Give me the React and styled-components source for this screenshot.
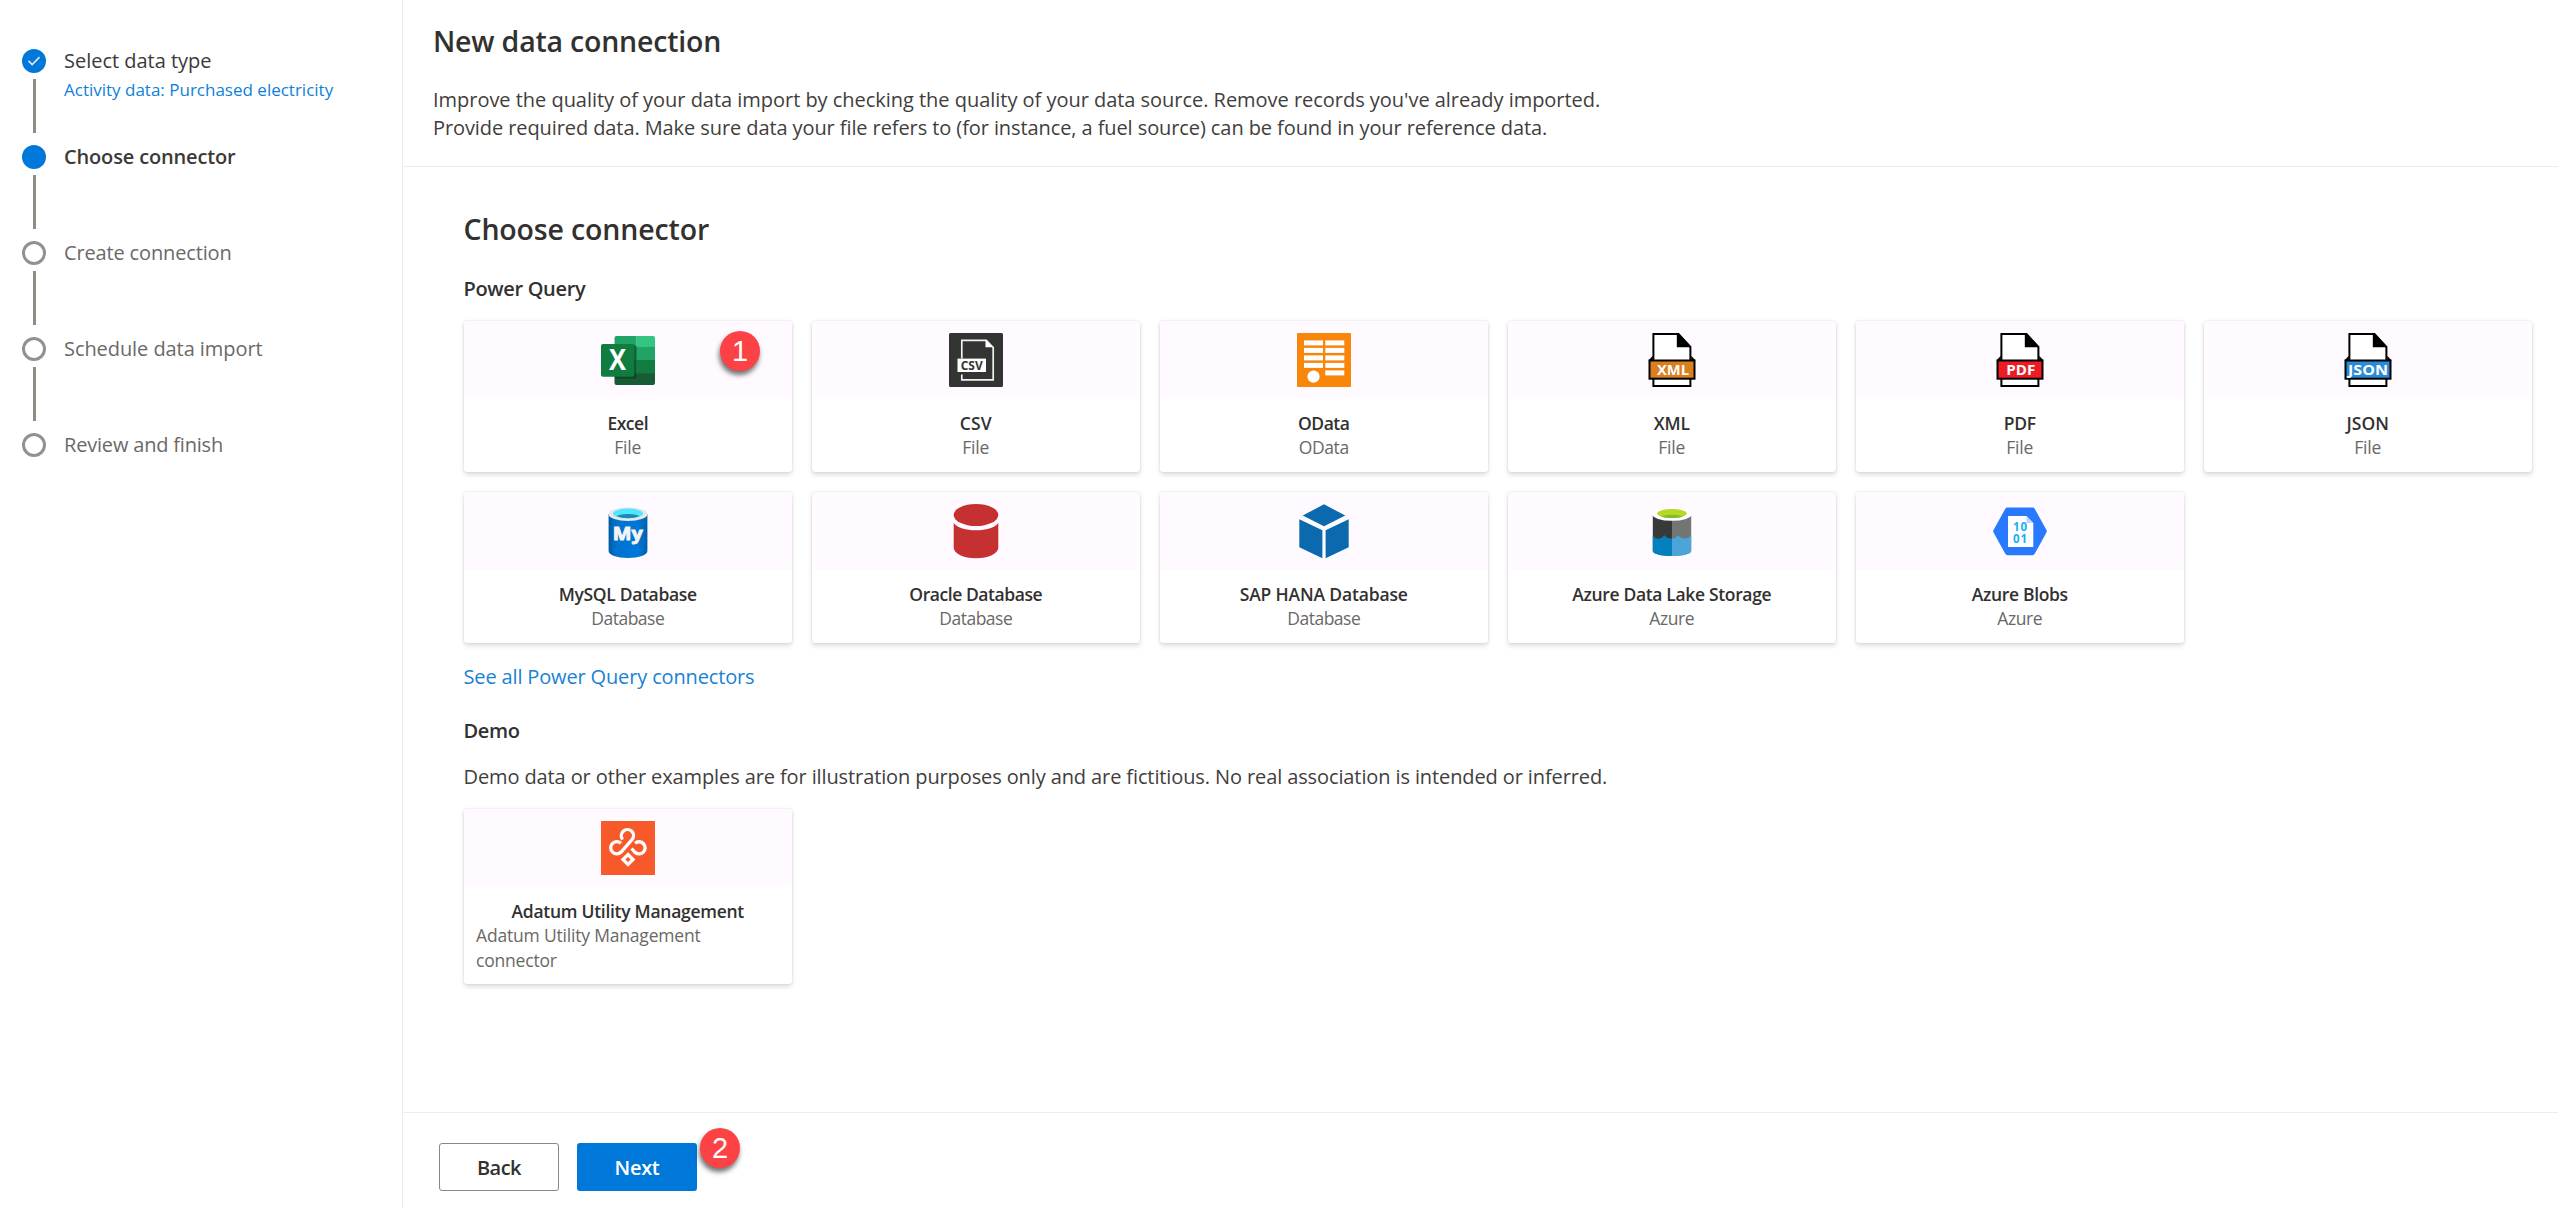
import React from "react";
import styled, { createGlobalStyle } from "styled-components";

const GlobalStyle = createGlobalStyle`
  *, *::before, *::after { box-sizing: border-box; }
  body {
    margin: 0;
    background: #fff;
    color: #323130;
    font-family: "Open Sans", "Noto Sans", sans-serif;
    overflow: hidden;
  }
`;

const Shell = styled.div`
  display: flex;
  height: 1208px;
  width: 100%;
`;

/* ---------- Stepper ---------- */

const Sidebar = styled.nav`
  flex: none;
  width: 403px;
  padding: 47px 0 0 22px;
  border-right: 1px solid #f0ebef;
`;

const Step = styled.div`
  display: flex;
  height: 96px;
`;

const Rail = styled.div`
  display: flex;
  flex-direction: column;
  align-items: center;
  width: 24px;
  padding-top: 1.5px;
`;

const Marker = styled.div`
  display: flex;
  align-items: center;
  justify-content: center;
  flex: none;
  width: 24px;
  height: 24px;
  border-radius: 50%;
  border: ${(p) => (p.$filled ? "0" : "3px solid #93918e")};
  background: ${(p) => (p.$filled ? "#0078d9" : "transparent")};
`;

const Connector = styled.div`
  width: 3px;
  height: 54px;
  margin-top: 6px;
  background: #8f8d86;
`;

const StepText = styled.div`
  display: flex;
  flex-direction: column;
  padding-left: 18px;
`;

const StepLabel = styled.span`
  font-size: 20px;
  line-height: 27px;
  white-space: nowrap;
  letter-spacing: ${(p) => p.$ls}px;
  font-weight: ${(p) => (p.$state === "current" ? 600 : 400)};
  color: ${(p) => (p.$state === "todo" ? "#6b6967" : "#3b3a39")};
`;

const StepDetail = styled.span`
  font-size: 17px;
  line-height: 32px;
  white-space: nowrap;
  color: #0f80da;
`;

/* ---------- Main column ---------- */

const Main = styled.main`
  display: flex;
  flex: 1;
  flex-direction: column;
  min-width: 0;
`;

const Header = styled.header`
  flex: none;
  height: 167px;
  padding: 21px 0 0 30px;
  border-bottom: 1px solid #f0ebef;
`;

const Heading = styled.h1`
  margin: 0;
  font-size: 28.5px;
  font-weight: 600;
  line-height: 40px;
  letter-spacing: ${(p) => p.$ls}px;
`;

const Intro = styled.div`
  margin-top: 25px;
`;

const Paragraph = styled.p`
  margin: 0;
  font-size: 20px;
  line-height: 28.3px;
  letter-spacing: ${(p) => p.$ls}px;
  color: #3f3e3d;
  white-space: nowrap;
`;

const Content = styled.section`
  flex: 1;
  padding: 42px 0 0 60.5px;
`;

const GroupTitle = styled.h2`
  margin: 26px 0 0;
  font-size: 20px;
  font-weight: 600;
  line-height: 28px;
  letter-spacing: -0.33px;
`;

const GroupNote = styled.div`
  margin-top: 18.5px;
`;

const CardGrid = styled.div`
  display: grid;
  grid-template-columns: repeat(6, 328.5px);
  grid-auto-rows: minmax(151px, auto);
  gap: 20px 19.5px;
  margin-top: 18px;
`;

const CardBox = styled.article`
  position: relative;
  display: flex;
  flex-direction: column;
  align-items: center;
  padding-bottom: 12.5px;
  border-radius: 3px;
  background: #fff;
  box-shadow: 0 2.4px 5.4px rgba(0, 0, 0, 0.13), 0 0 2px rgba(60, 0, 40, 0.14);
`;

const IconBand = styled.div`
  display: flex;
  align-items: center;
  justify-content: center;
  align-self: stretch;
  height: 78px;
  border-radius: 3px 3px 0 0;
  background: #fefaff;
`;

const CardText = styled.div`
  display: flex;
  flex-direction: column;
  align-items: center;
  padding: 12px 12.5px 0;
`;

const CardTitle = styled.span`
  font-size: 17.5px;
  font-weight: 600;
  line-height: 24px;
  letter-spacing: ${(p) => p.$ls}px;
`;

const CardKind = styled.span`
  font-size: 17.5px;
  line-height: 24.2px;
  letter-spacing: ${(p) => p.$ls}px;
  color: #6a6866;
`;

const Link = styled.a`
  display: block;
  margin-top: 19.5px;
  font-size: 20px;
  line-height: 28px;
  letter-spacing: -0.15px;
  color: #1a82d2;
`;

const Footer = styled.footer`
  display: flex;
  flex: none;
  gap: 18px;
  height: 96px;
  padding: 30px 0 0 36px;
  border-top: 1px solid #f0ebef;
`;

const ButtonSlot = styled.div`
  position: relative;
`;

const Button = styled.button`
  display: block;
  width: 120px;
  height: 48px;
  padding: 0;
  border: ${(p) => (p.$primary ? "0" : "1.5px solid #8a8886")};
  border-radius: 3px;
  background: ${(p) => (p.$primary ? "#0078d9" : "#fff")};
  color: ${(p) => (p.$primary ? "#fff" : "#323130")};
  font: 600 20px "Open Sans", "Noto Sans", sans-serif;
  letter-spacing: ${(p) => p.$ls}px;
`;

const Badge = styled.span`
  position: absolute;
  left: ${(p) => p.$left}px;
  top: ${(p) => p.$top}px;
  display: flex;
  align-items: center;
  justify-content: center;
  width: 40px;
  height: 40px;
  border-radius: 50%;
  background: #fd4245;
  color: #fff;
  font: 29px "Liberation Sans", Arial, sans-serif;
  box-shadow: -1px 4px 5px rgba(0, 0, 0, 0.55);
`;

/* ---------- Icons ---------- */

const Glyph = styled.svg`
  display: block;
  width: 54px;
  height: 54px;
  overflow: visible;
  font-family: "Open Sans", "Noto Sans", sans-serif;
  font-weight: 700;
`;

const Icon = ({ children }) => <Glyph viewBox="0 0 54 54">{children}</Glyph>;

const ExcelIcon = () => (
  <Icon>
    <defs>
      <clipPath id="xl-sheet"><rect x="13.5" y="3" width="40.5" height="49" rx="2" /></clipPath>
    </defs>
    <g clipPath="url(#xl-sheet)">
      <rect x="13" y="3" width="22.5" height="11" fill="#21a366" />
      <rect x="35.3" y="3" width="19" height="11" fill="#33c481" />
      <rect x="13" y="14" width="41" height="13.2" fill="#21a366" />
      <rect x="35.3" y="27" width="19" height="14" fill="#107c41" />
      <rect x="13" y="27" width="22.5" height="14" fill="#107c41" />
      <rect x="13" y="40.5" width="41" height="12" fill="#185c37" />
      <rect x="13" y="12" width="23" height="34" rx="2.5" fill="#06391d" opacity=".35" />
      <rect x="13" y="12" width="21.8" height="33" rx="2.5" fill="#06391d" opacity=".45" />
    </g>
    <rect x="0" y="11" width="33.3" height="32.7" rx="2" fill="#107c41" />
    <text x="16.5" y="37.3" fontSize="28" textAnchor="middle" fill="#fff" textLength="17" lengthAdjust="spacingAndGlyphs">X</text>
  </Icon>
);

const CsvIcon = () => (
  <Icon>
    <rect width="54" height="54" rx="1.5" fill="#323532" />
    <path d="M12.8 25.5V7.3H37.3L44.2 14.5V46.9H12.8V41.5" fill="none" stroke="#f4eff4" strokeWidth="1.7" />
    <path d="M36.5 6.8V14.3H44.5Z" fill="#fff" />
    <rect x="8.5" y="25.6" width="28.5" height="13.4" fill="#fff" />
    <text x="22.7" y="36.5" fontSize="11.8" textAnchor="middle" fill="#323532" textLength="22" lengthAdjust="spacingAndGlyphs">CSV</text>
  </Icon>
);

const ODataIcon = () => (
  <Icon>
    <rect width="54" height="54" rx="1" fill="#f8860b" />
    {[7.4, 14.9, 22.4, 29.9].map((y) => <rect key={y} x="7" y={y} width="19" height="5" fill="#fff" />)}
    {[7.4, 14.9, 22.4, 29.9, 37.4].map((y) => <rect key={y} x="28.3" y={y} width="19" height="5" fill="#fff" />)}
    <circle cx="16.5" cy="43.6" r="6.1" fill="#fff" />
  </Icon>
);

const FileIcon = ({ label, color, size, center = 27, width }) => (
  <Icon>
    <path d="M8.4 1H33.5L45.4 14V53H8.4Z" fill="#fff" stroke="#000" strokeWidth="2" />
    <path d="M31.8 1H34L46 14.2H31.8Z" fill="#000" />
    <path d="M3.4 27.5L7.8 22.8V27.5ZM50.6 27.5L46.2 22.8V27.5Z" fill="#000" />
    <rect x="4.5" y="27.5" width="45" height="18.2" fill={color} stroke="#000" strokeWidth="2" />
    <text x={center} y="42.2" fontSize={size} textAnchor="middle" fill="#fff" textLength={width} lengthAdjust="spacingAndGlyphs">{label}</text>
  </Icon>
);

const MySqlIcon = () => (
  <Icon>
    <defs>
      <linearGradient id="my-body">
        <stop offset="0" stopColor="#005ba1" />
        <stop offset=".2" stopColor="#0072cf" />
        <stop offset=".75" stopColor="#0078d9" />
        <stop offset="1" stopColor="#0060ab" />
      </linearGradient>
    </defs>
    <path d="M7.6 10V47C7.6 50.8 16 54 27 54S46.4 50.8 46.4 47V10Z" fill="url(#my-body)" />
    <ellipse cx="27" cy="10.2" rx="19.4" ry="6.9" fill="#e8e8e8" />
    <ellipse cx="27" cy="9.4" rx="15" ry="4.8" fill="#50e6ff" />
    <path d="M15.5 12.3C18 10.8 22 10 27 10S36 10.8 38.5 12.3C35.5 13.6 31.5 14.2 27 14.2S18.5 13.6 15.5 12.3Z" fill="#198ab3" />
    <text x="26.8" y="36.4" fontSize="17.5" textAnchor="middle" fill="#f4f4f4" stroke="#f4f4f4" strokeWidth=".9" textLength="30" lengthAdjust="spacingAndGlyphs">My</text>
  </Icon>
);

const OracleIcon = () => (
  <Icon>
    <ellipse cx="27" cy="11" rx="22.3" ry="11" fill="#c53030" />
    <path d="M4.7 19C8.5 24 17 26.3 27 26.3S45.5 24 49.3 19V43.5C49.3 49.5 39.5 54.3 27 54.3S4.7 49.5 4.7 43.5Z" fill="#c53030" />
  </Icon>
);

const SapIcon = () => (
  <Icon>
    <g fill="#0a6aad">
      <path d="M27 .3L48.3 11.6L27 22.2L5.7 11.6Z" />
      <path d="M2.3 15.2L25.4 26.2V54.3L2.3 43.3Z" />
      <path d="M51.7 15.2L28.6 26.2V54.3L51.7 43.3Z" />
    </g>
  </Icon>
);

const DataLakeIcon = () => (
  <Icon>
    <path d="M7.8 11V47C7.8 49.8 16 52 27 52V11Z" fill="#393939" />
    <path d="M46.2 11V47C46.2 49.8 38 52 27 52V11Z" fill="#737573" />
    <path d="M7.8 31.5C10 36 17 35.5 19.5 31C21 34 24 34.5 27 34.5V52C16 52 7.8 49.8 7.8 47Z" fill="#0182bf" />
    <path d="M27 34.5C30 34.5 31.5 33 33 31C35.5 35.5 43 35.5 46.2 31.5V47C46.2 49.8 38 52 27 52Z" fill="#4ba5d9" />
    <ellipse cx="27" cy="10.3" rx="19.8" ry="6.5" fill="#fff" />
    <ellipse cx="27" cy="9.5" rx="14.7" ry="4.6" fill="#b5da25" />
    <path d="M16 12.5C18.5 11.2 22.5 10.7 27 10.7S35.5 11.2 38 12.5C35 13.7 31 14.1 27 14.1S19 13.7 16 12.5Z" fill="#87be2c" />
  </Icon>
);

const BlobIcon = () => (
  <Icon>
    <path d="M14.5 3.4H39.5Q41 3.4 41.7 4.8L53.6 26.3Q54 27.3 53.6 28.3L41.7 49.8Q41 51.2 39.5 51.2H14.5Q13 51.2 12.3 49.8L.4 28.3Q0 27.3 .4 26.3L12.3 4.8Q13 3.4 14.5 3.4Z" fill="#2979ff" />
    <path d="M15 12H33.5L40.3 19V43H15Z" fill="#fff" />
    <path d="M33.5 12L40.3 19H33.5Z" fill="#bcd6fb" />
    <text x="27.6" y="27.3" fontSize="11.5" textAnchor="middle" fill="#18aef5" letterSpacing="1">10</text>
    <text x="27.6" y="39" fontSize="11.5" textAnchor="middle" fill="#18aef5" letterSpacing="1">01</text>
  </Icon>
);

const AdatumIcon = () => (
  <Icon>
    <rect width="54" height="54" fill="#f8592a" />
    <g fill="none" stroke="#fff" strokeWidth="3.3">
      <path d="M21.7 18.5A6.1 6.1 0 1 1 31.3 18.3L20.1 31A6.1 6.1 0 1 1 19.9 22.2" />
      <path d="M34.1 22.2A6.1 6.1 0 1 1 33.6 31L30.6 27.5" />
      <path d="M27 33.5L32 38.5L27 43.5L22 38.5Z" />
    </g>
  </Icon>
);

/* ---------- Data ---------- */

const steps = [
  { label: "Select data type", detail: "Activity data: Purchased electricity", state: "done", ls: -0.02 },
  { label: "Choose connector", state: "current", ls: -0.16 },
  { label: "Create connection", state: "todo", ls: -0.15 },
  { label: "Schedule data import", state: "todo", ls: -0.07 },
  { label: "Review and finish", state: "todo", ls: -0.19 },
];

const connectors = [
  { title: "Excel", kind: "File", icon: <ExcelIcon />, ls: -0.5, kls: -0.18, badge: "1" },
  { title: "CSV", kind: "File", icon: <CsvIcon />, ls: 0.1, kls: -0.18 },
  { title: "OData", kind: "OData", icon: <ODataIcon />, ls: -0.5, kls: -0.4 },
  { title: "XML", kind: "File", icon: <FileIcon label="XML" color="#d97f1e" size={15} center={28} width={32} />, ls: -0.18, kls: -0.18 },
  { title: "PDF", kind: "File", icon: <FileIcon label="PDF" color="#ed1c24" size={15} center={27.8} width={29} />, ls: -0.3, kls: -0.18 },
  { title: "JSON", kind: "File", icon: <FileIcon label="JSON" color="#2b8bd8" size={15} center={27} width={40} />, ls: 0.1, kls: -0.18 },
  { title: "MySQL Database", kind: "Database", icon: <MySqlIcon />, ls: -0.33, kls: -0.5 },
  { title: "Oracle Database", kind: "Database", icon: <OracleIcon />, ls: -0.44, kls: -0.5 },
  { title: "SAP HANA Database", kind: "Database", icon: <SapIcon />, ls: -0.16, kls: -0.5 },
  { title: "Azure Data Lake Storage", kind: "Azure", icon: <DataLakeIcon />, ls: -0.34, kls: -0.4 },
  { title: "Azure Blobs", kind: "Azure", icon: <BlobIcon />, ls: -0.34, kls: -0.4 },
];

const demoConnectors = [
  { title: "Adatum Utility Management", kind: "Adatum Utility Management connector", icon: <AdatumIcon />, ls: -0.28, kls: -0.19 },
];

const Card = ({ title, kind, icon, ls, kls, badge }) => (
  <CardBox>
    <IconBand>{icon}</IconBand>
    <CardText>
      <CardTitle $ls={ls}>{title}</CardTitle>
      <CardKind $ls={kls}>{kind}</CardKind>
    </CardText>
    {badge && <Badge $left={256.5} $top={10}>{badge}</Badge>}
  </CardBox>
);

export default function App() {
  return (
    <Shell>
      <GlobalStyle />
      <Sidebar>
        {steps.map((s, i) => (
          <Step key={s.label}>
            <Rail>
              <Marker $filled={s.state !== "todo"}>
                {s.state === "done" && (
                  <svg width="14" height="12" viewBox="0 0 14 12" fill="none" stroke="#d5e8f8" strokeWidth="1.7">
                    <path d="M1.5 5.8L5.2 9.5L12.5 2.2" />
                  </svg>
                )}
              </Marker>
              {i < steps.length - 1 && <Connector />}
            </Rail>
            <StepText>
              <StepLabel $state={s.state} $ls={s.ls}>{s.label}</StepLabel>
              {s.detail && <StepDetail>{s.detail}</StepDetail>}
            </StepText>
          </Step>
        ))}
      </Sidebar>
      <Main>
        <Header>
          <Heading $ls={-0.2}>New data connection</Heading>
          <Intro>
            <Paragraph $ls={-0.03}>Improve the quality of your data import by checking the quality of your data source. Remove records you've already imported.</Paragraph>
            <Paragraph $ls={-0.09}>Provide required data. Make sure data your file refers to (for instance, a fuel source) can be found in your reference data.</Paragraph>
          </Intro>
        </Header>
        <Content>
          <Heading as="h2" $ls={-0.15}>Choose connector</Heading>
          <GroupTitle>Power Query</GroupTitle>
          <CardGrid>
            {connectors.map((c) => <Card key={c.title} {...c} />)}
          </CardGrid>
          <Link>See all Power Query connectors</Link>
          <GroupTitle>Demo</GroupTitle>
          <GroupNote>
            <Paragraph $ls={-0.11}>Demo data or other examples are for illustration purposes only and are fictitious. No real association is intended or inferred.</Paragraph>
          </GroupNote>
          <CardGrid>
            {demoConnectors.map((c) => <Card key={c.title} {...c} />)}
          </CardGrid>
        </Content>
        <Footer>
          <Button $ls={-0.5}>Back</Button>
          <ButtonSlot>
            <Button $primary $ls={-0.28}>Next</Button>
            <Badge $left={123} $top={-15}>2</Badge>
          </ButtonSlot>
        </Footer>
      </Main>
    </Shell>
  );
}
